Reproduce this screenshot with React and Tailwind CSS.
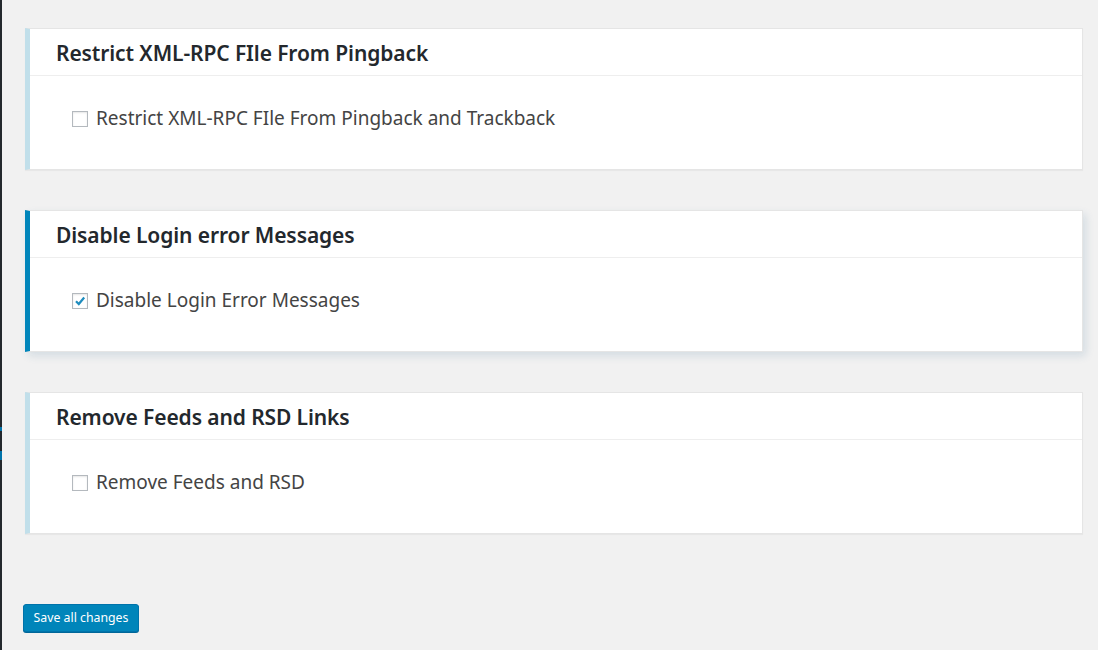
import React from "react";

function Card({ title, label, checked, active }) {
  return (
    <div
      className={
        "bg-white border border-[#e5e5e5] border-l-[5px] " +
        (active
          ? "border-l-[#0085ba] shadow-[3px_4px_8px_rgba(40,100,140,0.14)]"
          : "border-l-[#c1dfea] shadow-[0_1px_1px_rgba(0,0,0,0.04)]")
      }
    >
      <div className="h-[47px] flex items-center pl-[26px] pt-[2px] border-b border-[#eeeeee]">
        <h2 className="text-[21px] text-[#23282d] font-semibold leading-none tracking-[-0.1px]">{title}</h2>
      </div>
      <div className="h-[93px] flex items-start pt-[33px] pl-[42px]">
        <label className="flex items-center gap-[8px]">
          <span className="w-[16px] h-[16px] border border-[#b4b9be] bg-white flex items-center justify-center shadow-[inset_0_1px_2px_rgba(0,0,0,0.1)]">
            {checked && (
              <svg width="12" height="12" viewBox="0 0 12 12">
                <path d="M2 6.2 L4.8 9 L10.2 2.5" fill="none" stroke="#1e8cbe" strokeWidth="2.2" />
              </svg>
            )}
          </span>
          <span className="text-[19px] text-[#444] leading-none">{label}</span>
        </label>
      </div>
    </div>
  );
}

export default function App() {
  return (
    <div
      className="flex w-[1098px] h-[650px] bg-[#f1f1f1] overflow-hidden"
      style={{ fontFamily: '"Noto Sans", "Open Sans", sans-serif' }}
    >
      <div className="w-[2px] bg-[#23282d] flex flex-col">
        <div className="h-[427px]" />
        <div className="h-[4px] bg-[#0073aa]" />
        <div className="h-[20px]" />
        <div className="h-[9px] bg-[#0073aa]" />
      </div>
      <div className="flex-1 pl-[21px] pr-[15px] pt-[28px]">
        <div className="ml-[2px] flex flex-col gap-[40px]">
          <Card
            title="Restrict XML-RPC FIle From Pingback"
            label="Restrict XML-RPC FIle From Pingback and Trackback"
          />
          <Card
            title="Disable Login error Messages"
            label="Disable Login Error Messages"
            checked
            active
          />
          <Card title="Remove Feeds and RSD Links" label="Remove Feeds and RSD" />
        </div>
        <button className="mt-[70px] h-[28px] w-[116px] bg-[#0085ba] border border-[#0073aa] rounded-[3px] text-white text-[12.3px] shadow-[0_1px_0_#006799] leading-none">
          Save all changes
        </button>
      </div>
    </div>
  );
}
